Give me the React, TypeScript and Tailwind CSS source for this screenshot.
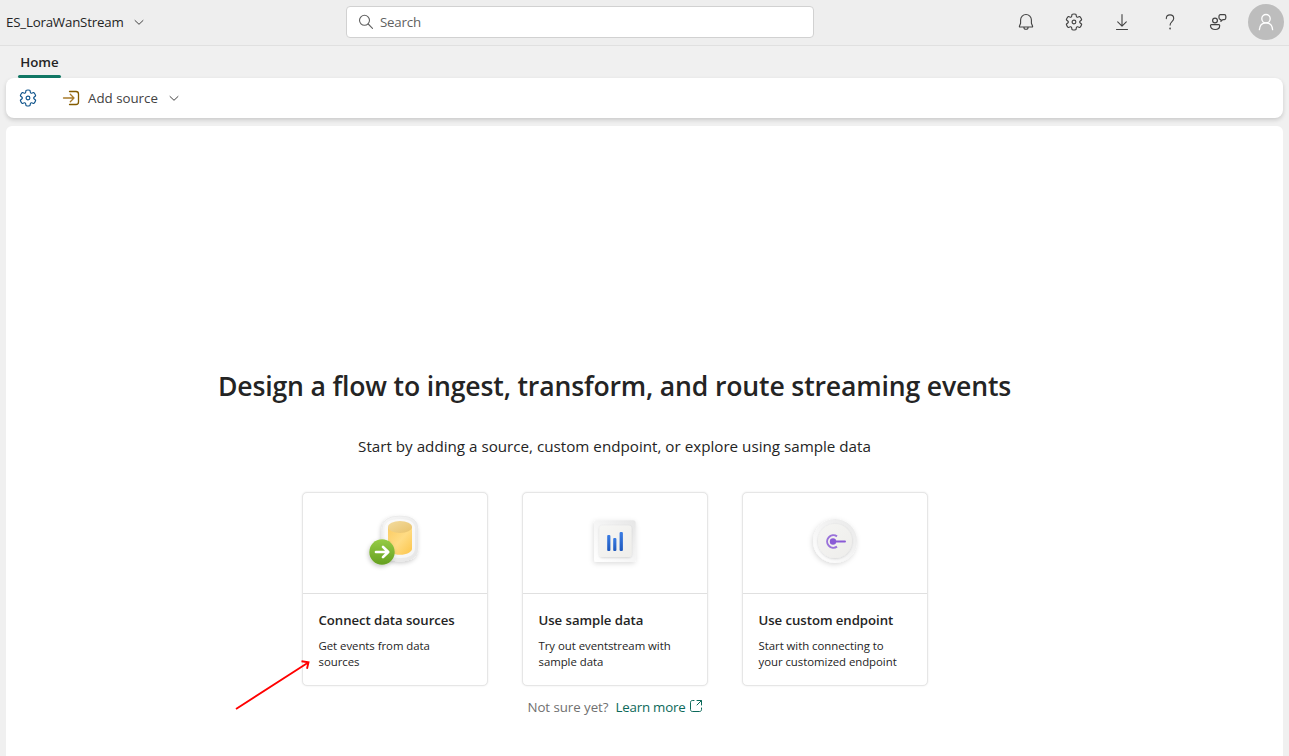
import type { ReactNode } from "react";

const GEAR =
  "M1.91 7.38A8.5 8.5 0 0 1 3.7 4.3a.5.5 0 0 1 .54-.13l1.92.68a1 1 0 0 0 1.32-.76l.36-2a.5.5 0 0 1 .4-.4 8.53 8.53 0 0 1 3.55 0c.2.04.35.2.38.4l.37 2a1 1 0 0 0 1.32.76l1.92-.68a.5.5 0 0 1 .54.13 8.5 8.5 0 0 1 1.78 3.08c.06.2 0 .4-.15.54l-1.56 1.32a1 1 0 0 0 0 1.52l1.56 1.32a.5.5 0 0 1 .15.54 8.5 8.5 0 0 1-1.78 3.08.5.5 0 0 1-.54.13l-1.92-.68a1 1 0 0 0-1.32.76l-.37 2a.5.5 0 0 1-.38.4 8.53 8.53 0 0 1-3.56 0 .5.5 0 0 1-.39-.4l-.36-2a1 1 0 0 0-1.32-.76l-1.92.68a.5.5 0 0 1-.54-.13 8.5 8.5 0 0 1-1.78-3.08.5.5 0 0 1 .15-.54l1.56-1.32a1 1 0 0 0 0-1.52L2.06 7.92a.5.5 0 0 1-.15-.54Z";

function Icon({ children, className = "" }: { children: ReactNode; className?: string }) {
  return (
    <svg
      viewBox="0 0 20 20"
      fill="none"
      stroke="currentColor"
      strokeWidth="1.1"
      strokeLinecap="round"
      strokeLinejoin="round"
      className={`size-5 shrink-0 ${className}`}
    >
      {children}
    </svg>
  );
}

function Gear({ className = "" }: { className?: string }) {
  return (
    <Icon className={className}>
      <g transform="translate(10 10) scale(.94) translate(-10 -10)">
        <path d={GEAR} strokeWidth="1.2" />
        <circle cx="10" cy="10" r="2" strokeWidth="1.2" />
      </g>
    </Icon>
  );
}

function Chevron({ className = "" }: { className?: string }) {
  return (
    <svg viewBox="0 0 12 12" fill="none" stroke="currentColor" strokeLinecap="round" strokeLinejoin="round" className={`size-3 shrink-0 ${className}`}>
      <path d="M2 4.500 6 8.300l4-3.800" />
    </svg>
  );
}

function SourcesArt() {
  return (
    <svg viewBox="0 0 90 80" className="h-20 w-[90px]">
      <defs>
        <linearGradient id="cyl" x1="0" y1="0" x2="1" y2="1">
          <stop offset="0" stopColor="#fbcb62" />
          <stop offset=".5" stopColor="#ffdc84" />
          <stop offset="1" stopColor="#fcc54a" />
        </linearGradient>
        <linearGradient id="cylTop" x1="0" y1="0" x2="1" y2="1">
          <stop offset="0" stopColor="#f3dc9f" />
          <stop offset="1" stopColor="#e9c26a" />
        </linearGradient>
        <linearGradient id="plate" x1="0" y1="0" x2="1" y2="1">
          <stop offset="0" stopColor="#f6f6f6" />
          <stop offset="1" stopColor="#e6e6e6" />
        </linearGradient>
        <linearGradient id="green" x1="0" y1="0" x2="0" y2="1">
          <stop offset="0" stopColor="#96cb45" />
          <stop offset="1" stopColor="#65a020" />
        </linearGradient>
        <filter id="soft1" x="-40%" y="-40%" width="180%" height="180%">
          <feDropShadow dx="-1" dy="2" stdDeviation="2.200" floodOpacity=".2" />
        </filter>
      </defs>
      <path
        d="M32 29q0-13 18-13t18 13v19q0 13-18 13T32 48Z"
        fill="url(#plate)"
        stroke="#e8e8e8"
        strokeWidth=".7"
        filter="url(#soft1)"
      />
      <path d="M34.500 29q0-10 15.300-10T65 29v19q0 10-15.200 10T34.500 48Z" fill="#fff" fillOpacity=".6" />
      <path d="M38 27v21.800c0 3.300 5.300 6 12 6s12-2.700 12-6V27Z" fill="url(#cyl)" />
      <ellipse cx="50" cy="27" rx="12" ry="5.900" fill="url(#cylTop)" />
      <circle cx="32" cy="52" r="12.700" fill="url(#green)" filter="url(#soft1)" />
      <path d="M26 52h11.500M33 46.900l5.200 5.100-5.200 5.100" fill="none" stroke="#fff" strokeWidth="2.700" strokeLinecap="round" strokeLinejoin="round" />
    </svg>
  );
}

function SampleArt() {
  return (
    <svg viewBox="0 0 90 80" className="h-20 w-[90px]">
      <defs>
        <linearGradient id="sq" x1="1" y1="0" x2="0" y2="1">
          <stop offset="0" stopColor="#e6e6e6" />
          <stop offset=".5" stopColor="#f5f5f5" />
          <stop offset="1" stopColor="#ffffff" />
        </linearGradient>
        <linearGradient id="tile" x1="0" y1="0" x2="1" y2="1">
          <stop offset="0" stopColor="#f6f6f4" />
          <stop offset="1" stopColor="#efeeeb" />
        </linearGradient>
        <linearGradient id="bar" x1="0" y1="0" x2="0" y2="1">
          <stop offset="0" stopColor="#3b7de4" />
          <stop offset="1" stopColor="#1e58bd" />
        </linearGradient>
        <filter id="soft2" x="-40%" y="-40%" width="180%" height="180%">
          <feDropShadow dx="-.5" dy="1.500" stdDeviation="2.600" floodOpacity=".14" />
        </filter>
        <filter id="soft2b" x="-40%" y="-40%" width="180%" height="180%">
          <feDropShadow dx="0" dy=".8" stdDeviation=".9" floodOpacity=".16" />
        </filter>
      </defs>
      <rect x="24" y="20.300" width="41.700" height="41.700" rx="2.500" fill="url(#sq)" filter="url(#soft2)" />
      <rect x="29.500" y="25.500" width="32" height="31.500" rx="3" fill="url(#tile)" filter="url(#soft2b)" />
      <rect x="37.200" y="35" width="3.200" height="16" rx="1" fill="url(#bar)" />
      <rect x="43.200" y="38" width="3.200" height="13" rx="1" fill="url(#bar)" />
      <rect x="49.600" y="32" width="3.300" height="19" rx="1" fill="url(#bar)" />
    </svg>
  );
}

function EndpointArt() {
  return (
    <svg viewBox="0 0 90 80" className="h-20 w-[90px]">
      <defs>
        <linearGradient id="ring" x1="1" y1="0" x2="0" y2="1">
          <stop offset="0" stopColor="#e8e8e8" />
          <stop offset=".5" stopColor="#f4f4f4" />
          <stop offset="1" stopColor="#ffffff" />
        </linearGradient>
        <linearGradient id="disc" x1="0" y1="0" x2="1" y2="1">
          <stop offset="0" stopColor="#f5f5f3" />
          <stop offset="1" stopColor="#eeedeb" />
        </linearGradient>
        <filter id="soft3" x="-40%" y="-40%" width="180%" height="180%">
          <feDropShadow dx="-.8" dy="1.500" stdDeviation="2.600" floodOpacity=".15" />
        </filter>
        <filter id="soft3b" x="-40%" y="-40%" width="180%" height="180%">
          <feDropShadow dx="0" dy=".8" stdDeviation=".9" floodOpacity=".16" />
        </filter>
      </defs>
      <circle cx="45" cy="41" r="22" fill="url(#ring)" filter="url(#soft3)" />
      <circle cx="45" cy="41" r="17" fill="url(#disc)" filter="url(#soft3b)" />
      <path d="M47 36.300A6.300 6.300 0 1 0 47 46.700" fill="none" stroke="#9a72da" strokeWidth="2" />
      <circle cx="43" cy="41.500" r="3.200" fill="#8a5ad6" />
      <path d="M43 41.500h12" stroke="#8a5ad6" strokeWidth="1.900" strokeLinecap="round" />
    </svg>
  );
}

type CardProps = { art: ReactNode; title: string; lines: [string, string] };

function Card({ art, title, lines }: CardProps) {
  return (
    <button className="flex h-[194px] w-[186px] flex-col rounded-[5px] border border-[#e6e6e6] bg-white text-left shadow-[0_0_2px_rgba(0,0,0,0.1)]">
      <span className="flex h-[101px] w-full justify-center border-b border-[#e0e0e0] pt-[7px]">{art}</span>
      <span className="flex flex-col px-4 pt-4">
        <span className="text-[13.200px] leading-5 font-semibold tracking-[-0.050px] whitespace-nowrap">{title}</span>
        <span className="mt-2 text-[11.400px] leading-4 tracking-[-0.040px] whitespace-nowrap">
          {lines[0]}
          <br />
          {lines[1]}
        </span>
      </span>
    </button>
  );
}

const cards: CardProps[] = [
  { art: <SourcesArt />, title: "Connect data sources", lines: ["Get events from data", "sources"] },
  { art: <SampleArt />, title: "Use sample data", lines: ["Try out eventstream with", "sample data"] },
  { art: <EndpointArt />, title: "Use custom endpoint", lines: ["Start with connecting to", "your customized endpoint"] },
];

function Header() {
  return (
    <header className="flex h-[46px] shrink-0 items-center border-b border-[#e0e0e0] bg-[#eeeeee] pr-[5px] pb-px pl-1.5">
      <div className="flex w-[340px] items-center">
        <span className="text-[13.300px] leading-5 tracking-[-0.200px]">ES_LoraWanStream</span>
        <Chevron className="ml-[9px] text-[#424242]" />
      </div>
      <div className="flex h-8 w-[468px] items-center rounded border border-[#d1d1d1] bg-white pl-[9px]">
        <Icon className="text-[#616161]">
          <circle cx="8.500" cy="8.300" r="5" />
          <path d="m12.200 12 4.300 4.300" />
        </Icon>
        <span className="ml-1 text-[13.300px] leading-5 tracking-[-0.200px] text-[#616161]">Search</span>
      </div>
      <div className="ml-auto flex items-center gap-7 text-[#424242]">
        <Icon>
          <path d="M10 2.500a5.400 5.400 0 0 0-5.400 5.400v3.400l-1.200 3c-.15.400.1.700.5.700h12.200c.4 0 .65-.3.500-.7l-1.200-3V7.900A5.400 5.400 0 0 0 10 2.500ZM7.900 15.200a2.100 2.100 0 0 0 4.200 0" />
        </Icon>
        <Gear />
        <Icon>
          <path d="M10 2.500v11.500M5.700 9.900l4.300 4.200 4.300-4.200M4.500 17.500h11" />
        </Icon>
        <Icon>
          <path d="M6.300 6.600c0-2.200 1.500-3.700 3.700-3.700s3.700 1.500 3.700 3.500c0 3-3.600 3.400-3.600 6.700" />
          <circle cx="10.100" cy="16.500" r=".35" />
        </Icon>
        <Icon>
          <circle cx="7" cy="8.500" r="2.400" strokeWidth="1.200" />
          <path d="M3.400 12.600h7.400c.5 0 .9.400.9.900 0 2.600-1.700 4-4.500 4s-4.700-1.400-4.700-4c0-.5.400-.9.900-.9Z" strokeWidth="1.200" />
          <path d="M11 4.200c0-.8.600-1.500 1.400-1.500h4c.8 0 1.400.7 1.400 1.500v1.900c0 .8-.6 1.500-1.400 1.500h-1.600l-1.900 1.700V7.600c-.9 0-1.900-.6-1.900-1.500Z" strokeWidth="1.200" />
        </Icon>
        <div className="-ml-2 flex size-9 items-center justify-center rounded-full bg-[#bdbdbd] text-white">
          <Icon>
            <circle cx="10" cy="6.700" r="4.200" strokeWidth="1.300" />
            <path d="M3.400 17.600c.3-4 2.900-6.700 6.600-6.700s6.300 2.700 6.600 6.700" strokeWidth="1.300" />
          </Icon>
        </div>
      </div>
    </header>
  );
}

export default function App() {
  return (
    <div className="flex h-[756px] w-[1289px] flex-col overflow-hidden bg-[#f0f0f0] font-['Open_Sans',sans-serif] text-[#242424]">
      <Header />
      <nav className="flex h-8 shrink-0 pl-[18px]">
        <div className="flex w-[43px] flex-col items-center justify-end">
          <span className="mb-[3px] text-[13.300px] leading-5 font-semibold">Home</span>
          <span className="h-[3px] w-full rounded-full bg-[#117865]" />
        </div>
      </nav>
      <div className="mx-1.5 flex h-10 shrink-0 items-center rounded-lg bg-white pl-3 shadow-[0_2px_4px_rgba(0,0,0,0.16)]">
        <Gear className="text-[#0f548c]" />
        <Icon className="ml-[23px] text-[#835b00]">
          <path d="M8.500 3.500h6.500c1.400 0 2.500 1.100 2.500 2.500v8c0 1.400-1.100 2.500-2.500 2.500H8.500" strokeWidth="1.300" />
          <path d="M2.500 10h10.500M9.300 6.300l3.700 3.700-3.700 3.700" stroke="#a87b2b" strokeWidth="1.300" />
        </Icon>
        <span className="ml-[7px] text-[13.300px] leading-5 text-[#424242]">Add source</span>
        <Chevron className="ml-2.5 text-[#424242]" />
      </div>
      <main className="relative mx-1.5 mt-2 flex min-h-0 flex-1 flex-col items-center rounded-t-md bg-white pt-[242px] pr-[60px]">
        <h1 className="text-[26.600px] leading-9 font-semibold tracking-[-0.160px] whitespace-nowrap">
          Design a flow to ingest, transform, and route streaming events
        </h1>
        <p className="mt-[30px] text-[15.200px] leading-6 whitespace-nowrap">
          Start by adding a source, custom endpoint, or explore using sample data
        </p>
        <div className="mt-[34px] flex gap-[34px]">
          {cards.map((c) => (
            <Card key={c.title} {...c} />
          ))}
        </div>
        <p className="mt-[11px] flex items-center pl-0.5 text-[13.300px] leading-5 whitespace-nowrap text-[#707070]">
          <span className="tracking-[-0.050px]">Not sure yet?</span>
          <a className="ml-[7px] flex items-center tracking-[-0.200px] text-[#0c695a]">
            Learn more
            <svg viewBox="0 0 16 16" fill="none" stroke="currentColor" strokeLinecap="round" strokeLinejoin="round" className="-mt-0.5 ml-0.5 size-4">
              <path d="M6 2.500H4.300c-1 0-1.800.8-1.800 1.800v7.400c0 1 .8 1.800 1.800 1.800h7.400c1 0 1.800-.8 1.800-1.800V10M9 2.500h4.500V7M13.300 2.700 9 7" />
            </svg>
          </a>
        </p>
        <svg viewBox="0 0 80 54" fill="none" stroke="#ff0000" strokeWidth="1.900" className="pointer-events-none absolute top-[532px] left-[227px] h-[54px] w-20">
          <path d="M3 51 74.500 5M68.500 3.200 75.500 4.200 74 10.800" />
        </svg>
      </main>
    </div>
  );
}
